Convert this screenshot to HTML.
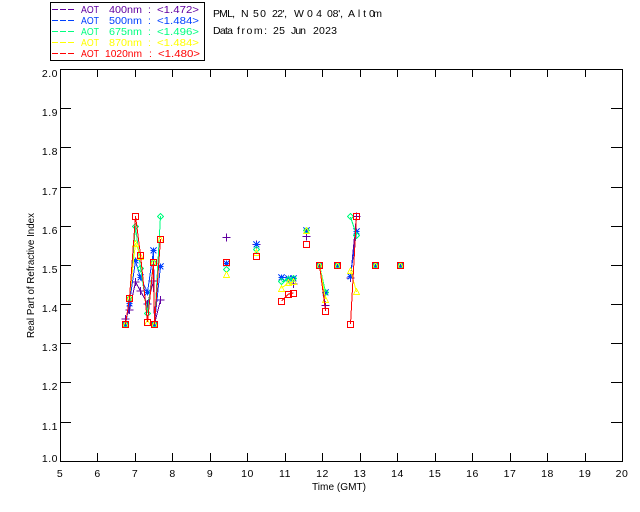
<!DOCTYPE html>
<html>
<head>
<meta charset="utf-8">
<style>
html,body{margin:0;padding:0;background:#fff;width:640px;height:512px;overflow:hidden}
svg{display:block}
text{font-family:"Liberation Sans",sans-serif;font-size:10.5px;fill:#000}
.n text{letter-spacing:.5px}
.v{fill:#6000a0}.b{fill:#0040ff}.e{fill:#00ff80}.y{fill:#ffff00}.r{fill:#ff0000}
.g polyline{fill:none;stroke-width:1}
.a,.g{shape-rendering:crispEdges}
</style>
</head>
<body>
<svg width="640" height="512" viewBox="0 0 640 512" xmlns="http://www.w3.org/2000/svg">
<defs>
<g id="p"><path d="M-4 0H4M0 -4V4" fill="none" stroke="currentColor"/></g>
<g id="s"><path d="M-3 0H3M-3 -3L3 3M-3 3L3 -3M0 -3V3" fill="none" stroke="currentColor"/></g>
<g id="d"><path d="M0 -3L3 0L0 3L-3 0Z" fill="none" stroke="currentColor"/></g>
<g id="t"><path d="M0 -3L3 3H-3Z" fill="none" stroke="currentColor"/></g>
<g id="q"><path d="M-3 -3H3V3H-3Z" fill="none" stroke="currentColor"/></g>
</defs>

<g class="a" fill="none" stroke="#000">
<rect x="50.5" y="2.5" width="154" height="58"/>
<rect x="60.5" y="69.5" width="562" height="392"/>
<path d="M97.5 69V77M135.5 69V77M172.5 69V77M210.5 69V77M247.5 69V77M285.5 69V77M322.5 69V77M360.5 69V77M397.5 69V77M435.5 69V77M472.5 69V77M510.5 69V77M547.5 69V77M585.5 69V77"/>
<path d="M97.5 461V453M135.5 461V453M172.5 461V453M210.5 461V453M247.5 461V453M285.5 461V453M322.5 461V453M360.5 461V453M397.5 461V453M435.5 461V453M472.5 461V453M510.5 461V453M547.5 461V453M585.5 461V453"/>
<path d="M60 108.5H71M60 147.5H71M60 187.5H71M60 226.5H71M60 265.5H71M60 304.5H71M60 343.5H71M60 382.5H71M60 422.5H71"/>
<path d="M622 108.5H611M622 147.5H611M622 187.5H611M622 226.5H611M622 265.5H611M622 304.5H611M622 343.5H611M622 382.5H611M622 422.5H611"/>
</g>

<g class="a" fill="none">
<path d="M52 9.5H75" stroke="#6000a0" stroke-dasharray="6 2"/>
<path d="M52 20.5H75" stroke="#0040ff" stroke-dasharray="6 2"/>
<path d="M52 31.5H75" stroke="#00ff80" stroke-dasharray="6 2"/>
<path d="M52 42.5H75" stroke="#ffff00" stroke-dasharray="6 2"/>
<path d="M52 53.5H75" stroke="#ff0000" stroke-dasharray="6 2"/>
</g>
<text class="v" x="81" y="13" textLength="18" lengthAdjust="spacingAndGlyphs">AOT</text><text class="v" x="109" y="13" textLength="33" lengthAdjust="spacingAndGlyphs">400nm</text><text class="v" x="148" y="13">:</text><text class="v" x="157" y="13" textLength="42" lengthAdjust="spacingAndGlyphs">&lt;1.472&gt;</text>
<text class="b" x="81" y="24" textLength="18" lengthAdjust="spacingAndGlyphs">AOT</text><text class="b" x="109" y="24" textLength="33" lengthAdjust="spacingAndGlyphs">500nm</text><text class="b" x="148" y="24">:</text><text class="b" x="157" y="24" textLength="42" lengthAdjust="spacingAndGlyphs">&lt;1.484&gt;</text>
<text class="e" x="81" y="35" textLength="18" lengthAdjust="spacingAndGlyphs">AOT</text><text class="e" x="109" y="35" textLength="33" lengthAdjust="spacingAndGlyphs">675nm</text><text class="e" x="148" y="35">:</text><text class="e" x="157" y="35" textLength="42" lengthAdjust="spacingAndGlyphs">&lt;1.496&gt;</text>
<text class="y" x="81" y="46" textLength="18" lengthAdjust="spacingAndGlyphs">AOT</text><text class="y" x="109" y="46" textLength="33" lengthAdjust="spacingAndGlyphs">870nm</text><text class="y" x="148" y="46">:</text><text class="y" x="157" y="46" textLength="42" lengthAdjust="spacingAndGlyphs">&lt;1.484&gt;</text>
<text class="r" x="81" y="57" textLength="18" lengthAdjust="spacingAndGlyphs">AOT</text><text class="r" x="105" y="57" textLength="37" lengthAdjust="spacingAndGlyphs">1020nm</text><text class="r" x="149" y="57">:</text><text class="r" x="158" y="57" textLength="42" lengthAdjust="spacingAndGlyphs">&lt;1.480&gt;</text>

<text x="213" y="17" textLength="22" lengthAdjust="spacing">PML,</text><text x="241" y="17">N</text><text x="253" y="17" textLength="13" lengthAdjust="spacing">50</text><text x="272" y="17" textLength="15" lengthAdjust="spacing">22',</text><text x="294" y="17">W</text><text x="307" y="17" textLength="15" lengthAdjust="spacing">04</text><text x="327" y="17" textLength="16" lengthAdjust="spacing">08',</text><text x="348" y="17" textLength="18" lengthAdjust="spacing">Alt</text><text x="369" y="17" textLength="13" lengthAdjust="spacing">0m</text>
<text x="213" y="34" textLength="20" lengthAdjust="spacing">Data</text><text x="237" y="34" textLength="30" lengthAdjust="spacing">from:</text><text x="273" y="34" textLength="12" lengthAdjust="spacing">25</text><text x="291" y="34" textLength="15" lengthAdjust="spacing">Jun</text><text x="313" y="34" textLength="24" lengthAdjust="spacing">2023</text>

<g class="n" text-anchor="end">
<text x="58" y="77">2.0</text>
<text x="58" y="116">1.9</text>
<text x="58" y="155">1.8</text>
<text x="58" y="195">1.7</text>
<text x="58" y="234">1.6</text>
<text x="58" y="273">1.5</text>
<text x="58" y="312">1.4</text>
<text x="58" y="351">1.3</text>
<text x="58" y="390">1.2</text>
<text x="58" y="430">1.1</text>
<text x="58" y="462">1.0</text>
</g>
<g class="n" text-anchor="middle">
<text x="60" y="477">5</text><text x="97.5" y="477">6</text><text x="135" y="477">7</text><text x="172.5" y="477">8</text>
<text x="210" y="477">9</text><text x="247.5" y="477">10</text><text x="285" y="477">11</text><text x="322.5" y="477">12</text>
<text x="360" y="477">13</text><text x="397.5" y="477">14</text><text x="435" y="477">15</text><text x="472.5" y="477">16</text>
<text x="510" y="477">17</text><text x="547.5" y="477">18</text><text x="585" y="477">19</text><text x="622" y="477">20</text>
</g>
<text x="312" y="490" textLength="54" lengthAdjust="spacingAndGlyphs">Time (GMT)</text>
<text transform="translate(34,338) rotate(-90)" textLength="125" lengthAdjust="spacingAndGlyphs">Real Part of Refractive Index</text>

<!-- purple -->
<g class="g" color="#6000a0" stroke="#6000a0">
<polyline points="125.5,319 129.5,310 135.5,282 140.5,291 147.5,304 153.5,281 154.5,324 160.5,300"/>
<polyline points="319.5,265 325.5,306"/>
<polyline points="350.5,278 356.5,216"/>
<use href="#p" x="125.5" y="319"/><use href="#p" x="129.5" y="310"/><use href="#p" x="135.5" y="282"/><use href="#p" x="140.5" y="291"/><use href="#p" x="147.5" y="304"/><use href="#p" x="153.5" y="281"/><use href="#p" x="160.5" y="300"/>
<use href="#p" x="226.5" y="237.5"/><use href="#p" x="256.5" y="244.5"/><use href="#p" x="306.5" y="236.5"/><use href="#p" x="293.5" y="284"/>
<use href="#p" x="325.5" y="305.5"/><use href="#p" x="350.5" y="278"/><use href="#p" x="356.5" y="216.5"/>
</g>
<!-- blue -->
<g class="g" color="#0040ff" stroke="#0040ff">
<polyline points="125.5,324 129.5,303 135.5,261 140.5,278 147.5,292 153.5,251 154.5,324 160.5,266"/>
<polyline points="319.5,265 325.5,292"/>
<polyline points="350.5,276 356.5,232"/>
<polyline points="281.5,277 288.5,278 293.5,278"/>
<use href="#s" x="125.5" y="324.5"/><use href="#s" x="129.5" y="303.5"/><use href="#s" x="135.5" y="260.5"/><use href="#s" x="140.5" y="277.5"/><use href="#s" x="147.5" y="292.5"/><use href="#s" x="153.5" y="250.5"/><use href="#s" x="154.5" y="324.5"/><use href="#s" x="160.5" y="266.5"/>
<use href="#s" x="226.5" y="263.5"/><use href="#s" x="256.5" y="244.5"/><use href="#s" x="306.5" y="230.5"/>
<use href="#s" x="281.5" y="277.5"/><use href="#s" x="288.5" y="278.5"/><use href="#s" x="293.5" y="278.5"/>
<use href="#s" x="319.5" y="265.5"/><use href="#s" x="325.5" y="292.5"/><use href="#s" x="337.5" y="265.5"/><use href="#s" x="375.5" y="265.5"/><use href="#s" x="400.5" y="265.5"/>
<use href="#s" x="350.5" y="276.5"/><use href="#s" x="356.5" y="231.5"/>
</g>
<!-- green -->
<g class="g" color="#00ff80" stroke="#00ff80">
<polyline points="125.5,324 129.5,298 135.5,226 140.5,268 147.5,313 153.5,262 154.5,324 160.5,216"/>
<polyline points="319.5,265 325.5,292"/>
<polyline points="350.5,217 356.5,235"/>
<polyline points="281.5,282 288.5,279 293.5,279"/>
<use href="#d" x="125.5" y="324.5"/><use href="#d" x="129.5" y="298.5"/><use href="#d" x="135.5" y="226.5"/><use href="#d" x="140.5" y="268.5"/><use href="#d" x="147.5" y="313.5"/><use href="#d" x="153.5" y="262.5"/><use href="#d" x="154.5" y="324.5"/><use href="#d" x="160.5" y="216.5"/>
<use href="#d" x="226.5" y="269.5"/><use href="#d" x="256.5" y="249.5"/><use href="#d" x="306.5" y="230.5"/>
<use href="#d" x="281.5" y="281.5"/><use href="#d" x="288.5" y="279.5"/><use href="#d" x="293.5" y="278.5"/>
<use href="#d" x="319.5" y="265.5"/><use href="#d" x="325.5" y="292.5"/><use href="#d" x="337.5" y="265.5"/><use href="#d" x="375.5" y="265.5"/><use href="#d" x="400.5" y="265.5"/>
<use href="#d" x="350.5" y="216.5"/><use href="#d" x="356.5" y="235.5"/>
</g>
<!-- yellow -->
<g class="g" color="#ffff00" stroke="#ffff00">
<polyline points="125.5,324 129.5,298 135.5,243 140.5,256 147.5,322 153.5,262 154.5,324 160.5,239"/>
<polyline points="319.5,265 325.5,299"/>
<polyline points="350.5,270 356.5,292"/>
<polyline points="281.5,288 288.5,283 293.5,282"/>
<use href="#t" x="125.5" y="324.5"/><use href="#t" x="129.5" y="298.5"/><use href="#t" x="135.5" y="243.5"/><use href="#t" x="140.5" y="256.5"/><use href="#t" x="147.5" y="322.5"/><use href="#t" x="153.5" y="262.5"/><use href="#t" x="154.5" y="324.5"/><use href="#t" x="160.5" y="239.5"/>
<use href="#t" x="226.5" y="274.5"/><use href="#t" x="256.5" y="252.5"/><use href="#t" x="306.5" y="230.5"/>
<use href="#t" x="281.5" y="288.5"/><use href="#t" x="288.5" y="282.5"/><use href="#t" x="293.5" y="281.5"/>
<use href="#t" x="319.5" y="265.5"/><use href="#t" x="325.5" y="299.5"/><use href="#t" x="337.5" y="265.5"/><use href="#t" x="375.5" y="265.5"/><use href="#t" x="400.5" y="265.5"/>
<use href="#t" x="350.5" y="270.5"/><use href="#t" x="356.5" y="291.5"/>
</g>
<!-- red -->
<g class="g" color="#ff0000" stroke="#ff0000">
<polyline points="125.5,324 129.5,298 135.5,216 140.5,255 147.5,322 153.5,262 154.5,324 160.5,239"/>
<polyline points="319.5,265 325.5,311"/>
<polyline points="350.5,324 356.5,216"/>
<polyline points="281.5,301 288.5,294 293.5,293"/>
<use href="#q" x="125.5" y="324.5"/><use href="#q" x="129.5" y="298.5"/><use href="#q" x="135.5" y="216.5"/><use href="#q" x="140.5" y="255.5"/><use href="#q" x="147.5" y="322.5"/><use href="#q" x="153.5" y="262.5"/><use href="#q" x="154.5" y="324.5"/><use href="#q" x="160.5" y="239.5"/>
<use href="#q" x="226.5" y="262.5"/><use href="#q" x="256.5" y="256.5"/><use href="#q" x="306.5" y="244.5"/>
<use href="#q" x="281.5" y="301.5"/><use href="#q" x="288.5" y="294.5"/><use href="#q" x="293.5" y="293.5"/>
<use href="#q" x="319.5" y="265.5"/><use href="#q" x="325.5" y="311.5"/><use href="#q" x="337.5" y="265.5"/><use href="#q" x="375.5" y="265.5"/><use href="#q" x="400.5" y="265.5"/>
<use href="#q" x="350.5" y="324.5"/><use href="#q" x="356.5" y="216.5"/>
</g>
</svg>
</body>
</html>
